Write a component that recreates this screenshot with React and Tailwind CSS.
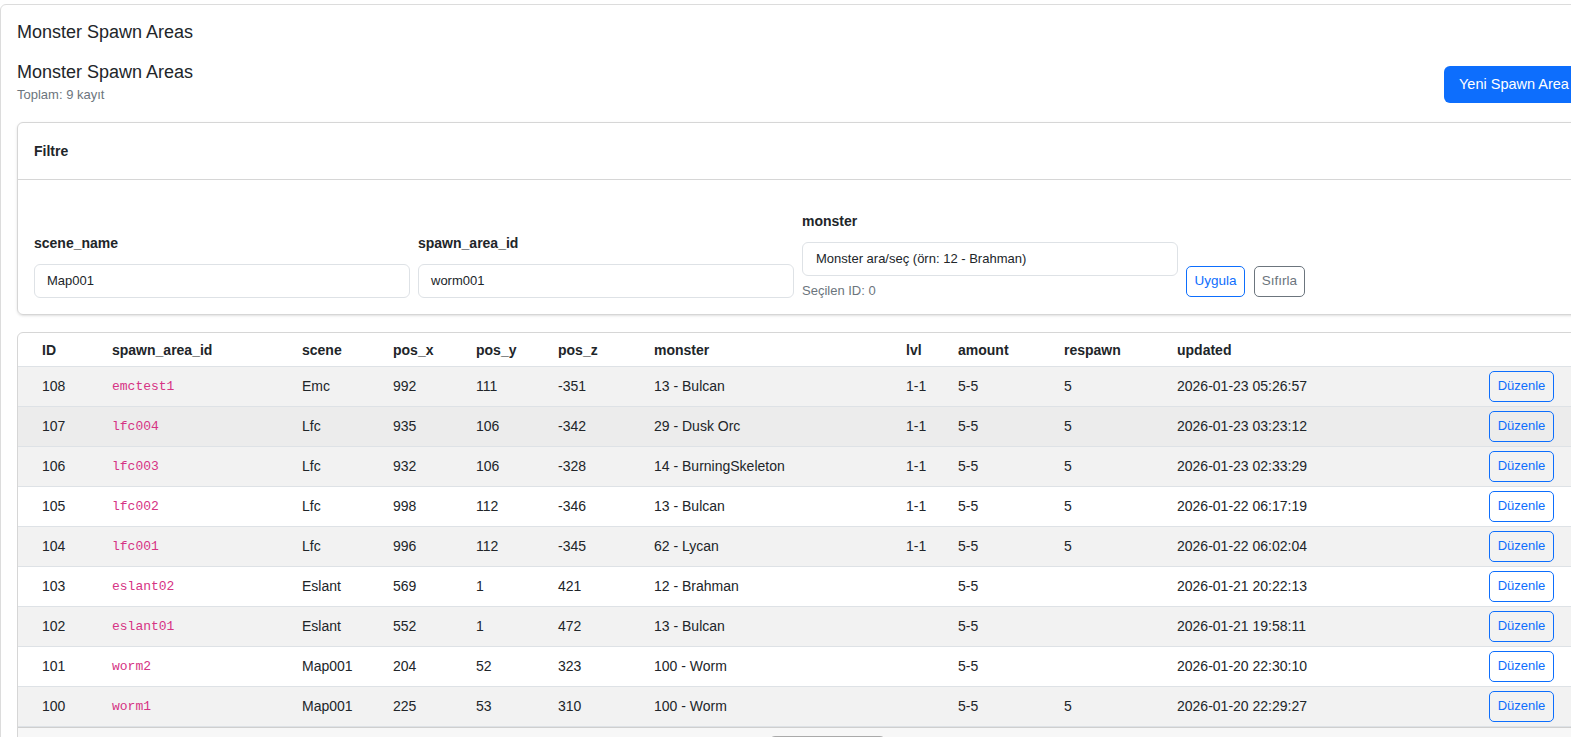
import React from "react";

const rows = [
  { id: 108, area: "emctest1", scene: "Emc", x: 992, y: 111, z: -351, monster: "13 - Bulcan", lvl: "1-1", amount: "5-5", respawn: "5", updated: "2026-01-23 05:26:57", bg: "bg-[#f2f2f2]" },
  { id: 107, area: "lfc004", scene: "Lfc", x: 935, y: 106, z: -342, monster: "29 - Dusk Orc", lvl: "1-1", amount: "5-5", respawn: "5", updated: "2026-01-23 03:23:12", bg: "bg-[#ececec]" },
  { id: 106, area: "lfc003", scene: "Lfc", x: 932, y: 106, z: -328, monster: "14 - BurningSkeleton", lvl: "1-1", amount: "5-5", respawn: "5", updated: "2026-01-23 02:33:29", bg: "bg-[#f2f2f2]" },
  { id: 105, area: "lfc002", scene: "Lfc", x: 998, y: 112, z: -346, monster: "13 - Bulcan", lvl: "1-1", amount: "5-5", respawn: "5", updated: "2026-01-22 06:17:19", bg: "bg-white" },
  { id: 104, area: "lfc001", scene: "Lfc", x: 996, y: 112, z: -345, monster: "62 - Lycan", lvl: "1-1", amount: "5-5", respawn: "5", updated: "2026-01-22 06:02:04", bg: "bg-[#f2f2f2]" },
  { id: 103, area: "eslant02", scene: "Eslant", x: 569, y: 1, z: 421, monster: "12 - Brahman", lvl: "", amount: "5-5", respawn: "", updated: "2026-01-21 20:22:13", bg: "bg-white" },
  { id: 102, area: "eslant01", scene: "Eslant", x: 552, y: 1, z: 472, monster: "13 - Bulcan", lvl: "", amount: "5-5", respawn: "", updated: "2026-01-21 19:58:11", bg: "bg-[#f2f2f2]" },
  { id: 101, area: "worm2", scene: "Map001", x: 204, y: 52, z: 323, monster: "100 - Worm", lvl: "", amount: "5-5", respawn: "", updated: "2026-01-20 22:30:10", bg: "bg-white" },
  { id: 100, area: "worm1", scene: "Map001", x: 225, y: 53, z: 310, monster: "100 - Worm", lvl: "", amount: "5-5", respawn: "5", updated: "2026-01-20 22:29:27", bg: "bg-[#f2f2f2]" },
];

function Field({ label, value }) {
  return (
    <div className="flex flex-col">
      <label className="text-[14px] font-bold leading-5 mb-[11px]">{label}</label>
      <div className="h-[34px] border border-[#dee2e6] rounded-[6px] px-[12px] flex items-center text-[13px] bg-white">
        {value}
      </div>
    </div>
  );
}

export default function App() {
  return (
    <div
      className="h-screen w-full overflow-hidden bg-white text-[#212529]"
      style={{ fontFamily: '"Liberation Sans", Arial, sans-serif' }}
    >
      <div className="pt-1">
        <div className="w-[1596px] border border-[#dcdcdc] rounded-[6px] px-4 pt-[16px]">
          <h1 className="text-[18px] leading-[22px]">Monster Spawn Areas</h1>

          <div className="flex items-end justify-between mt-[18px]">
            <div>
              <h2 className="text-[18px] leading-[22px]">Monster Spawn Areas</h2>
              <div className="text-[13px] leading-[18px] text-[#6c757d] mt-[3px]">Toplam: 9 kayıt</div>
            </div>
            <button className="h-[37px] w-[135px] mb-[1px] bg-[#0d6efd] text-white rounded-[6px] text-[14.5px] text-left pl-[15px] whitespace-nowrap overflow-hidden">
              Yeni Spawn Area
            </button>
          </div>

          <div className="mt-[18px] border border-[#d6d6d6] rounded-[6px] shadow-sm">
            <div className="px-4 py-[18px] border-b border-[#d6d6d6] text-[14px] font-bold leading-5">Filtre</div>
            <div className="px-4 pt-[31px] pb-[16px] grid grid-cols-[376px_376px_376px_1fr] gap-x-2 items-end">
              <Field label="scene_name" value="Map001" />
              <Field label="spawn_area_id" value="worm001" />
              <div className="flex flex-col">
                <label className="text-[14px] font-bold leading-5 mb-[11px]">monster</label>
                <div className="h-[34px] border border-[#dee2e6] rounded-[6px] px-[13px] flex items-center text-[13px] text-[#212529]">
                  Monster ara/seç (örn: 12 - Brahman)
                </div>
                <div className="text-[13px] text-[#6c757d] leading-5 mt-[5px] -mb-[3px]">Seçilen ID: 0</div>
              </div>
              <div className="flex gap-[9px] mb-[1px]">
                <button className="h-[31px] w-[59px] border border-[#0d6efd] text-[#0d6efd] rounded-[5px] text-[13.5px]">Uygula</button>
                <button className="h-[31px] w-[51px] border border-[#6c757d] text-[#6c757d] rounded-[5px] text-[13.5px]">Sıfırla</button>
              </div>
            </div>
          </div>

          <div className="mt-[17px] border border-[#d6d6d6] rounded-t-[6px] overflow-hidden">
            <table className="w-full table-fixed text-[14px] border-collapse">
              <colgroup>
                <col className="w-[86px]" />
                <col className="w-[190px]" />
                <col className="w-[91px]" />
                <col className="w-[83px]" />
                <col className="w-[82px]" />
                <col className="w-[96px]" />
                <col className="w-[252px]" />
                <col className="w-[52px]" />
                <col className="w-[106px]" />
                <col className="w-[113px]" />
                <col className="w-[232px]" />
                <col />
              </colgroup>
              <thead>
                <tr className="h-[33px] border-b border-[#dee2e6] text-left">
                  <th className="pl-[24px] pr-2 pt-[2px] font-bold">ID</th>
                  <th className="px-2 pt-[2px] font-bold">spawn_area_id</th>
                  <th className="px-2 pt-[2px] font-bold">scene</th>
                  <th className="px-2 pt-[2px] font-bold">pos_x</th>
                  <th className="px-2 pt-[2px] font-bold">pos_y</th>
                  <th className="px-2 pt-[2px] font-bold">pos_z</th>
                  <th className="px-2 pt-[2px] font-bold">monster</th>
                  <th className="px-2 pt-[2px] font-bold">lvl</th>
                  <th className="px-2 pt-[2px] font-bold">amount</th>
                  <th className="px-2 pt-[2px] font-bold">respawn</th>
                  <th className="px-2 pt-[2px] font-bold">updated</th>
                  <th className="pr-[24px]"></th>
                </tr>
              </thead>
              <tbody>
                {rows.map((r) => (
                  <tr key={r.id} className={`h-[40px] border-b border-[#dee2e6] ${r.bg}`}>
                    <td className="pl-[24px] pr-2">{r.id}</td>
                    <td className="px-2">
                      <code className="text-[13px] text-[#d63384]" style={{ fontFamily: '"Liberation Mono", "DejaVu Sans Mono", monospace' }}>
                        {r.area}
                      </code>
                    </td>
                    <td className="px-2">{r.scene}</td>
                    <td className="px-2">{r.x}</td>
                    <td className="px-2">{r.y}</td>
                    <td className="px-2">{r.z}</td>
                    <td className="px-2">{r.monster}</td>
                    <td className="px-2">{r.lvl}</td>
                    <td className="px-2">{r.amount}</td>
                    <td className="px-2">{r.respawn}</td>
                    <td className="px-2">{r.updated}</td>
                    <td className="pr-[24px] text-right">
                      <button className="h-[31px] w-[65px] border border-[#0d6efd] text-[#0d6efd] rounded-[5px] text-[13px]">
                        Düzenle
                      </button>
                    </td>
                  </tr>
                ))}
              </tbody>
            </table>
            <div className="border-t border-[#cfcfcf] bg-[#f7f7f7] h-[40px] flex pt-[8px] pl-[751px]">
              <div className="w-[117px] h-[30px] border border-[#aaaaaa] rounded-[6px] bg-white"></div>
            </div>
          </div>
        </div>
      </div>
    </div>
  );
}
